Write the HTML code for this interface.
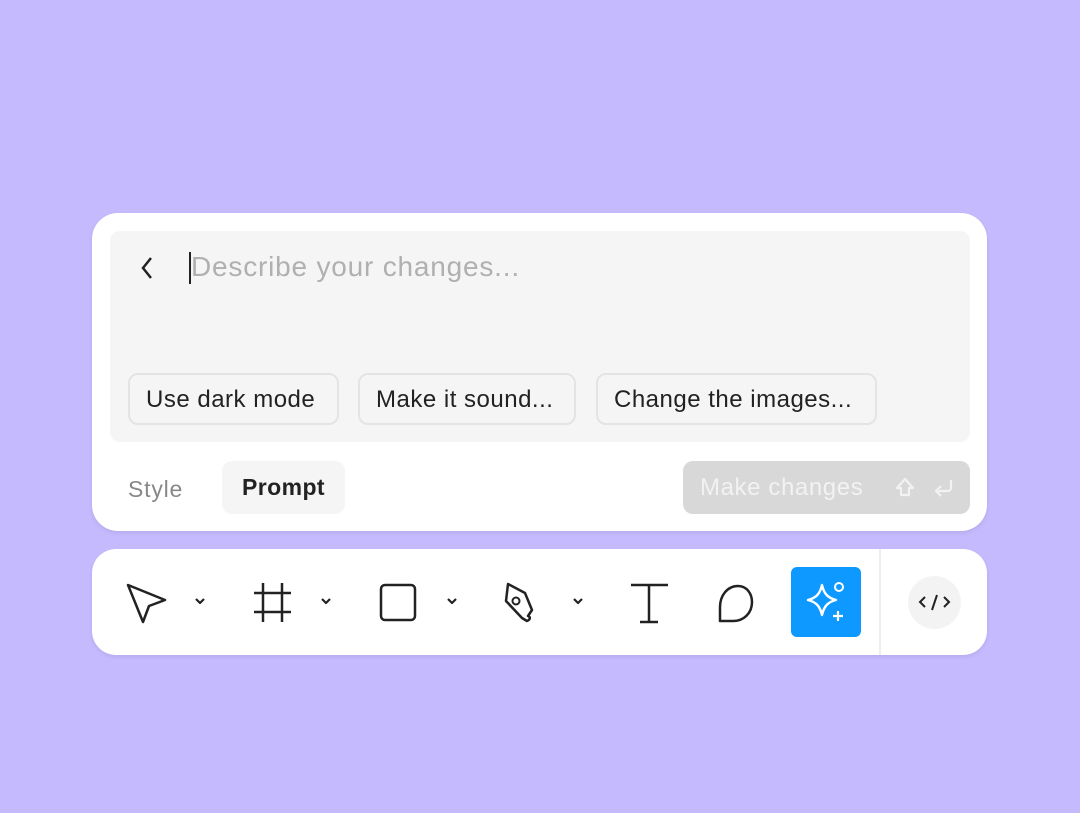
<!DOCTYPE html><html><head><style>
body{margin:0;width:1080px;height:813px;background:#c5bafe;font-family:"Liberation Sans",sans-serif;position:relative;overflow:hidden}
.card{position:absolute;left:92px;top:213px;width:895px;height:318px;background:#fff;border-radius:26px;box-shadow:0 2px 4px rgba(0,0,0,.08)}
.inner{position:absolute;left:18px;top:18px;width:860px;height:211px;background:#f5f5f5;border-radius:10px}
.chip{position:absolute;top:142px;height:52px;border:2px solid #e4e4e4;border-radius:10px;box-sizing:border-box;font-size:24px;letter-spacing:0.5px;color:#222;line-height:50px;padding-left:16px;background:#f5f5f5}
.tool{position:absolute;left:92px;top:549px;width:895px;height:106px;background:#fff;border-radius:24px;box-shadow:0 2px 4px rgba(0,0,0,.08)}
svg{position:absolute}
</style></head><body>
<div class="card">
<div class="inner">
<svg style="left:28px;top:23px" width="20" height="30" viewBox="0 0 20 30"><path d="M13 4L5 14l8 10" stroke="#222" stroke-width="2.5" fill="none"/></svg>
<div style="position:absolute;left:79px;top:21px;width:2px;height:32px;background:#222"></div>
<div style="position:absolute;left:81px;top:20px;font-size:28px;letter-spacing:0.8px;color:#b0b0b0">Describe your changes...</div>
<div class="chip" style="left:18px;width:211px">Use dark mode</div>
<div class="chip" style="left:248px;width:218px">Make it sound...</div>
<div class="chip" style="left:486px;width:281px">Change the images...</div>
</div>
<div style="position:absolute;left:36px;top:263px;font-size:23px;letter-spacing:0.8px;color:#888">Style</div>
<div style="position:absolute;left:130px;top:248px;width:123px;height:53px;background:#f5f5f5;border-radius:10px;font-size:23px;font-weight:bold;letter-spacing:0.4px;color:#222;text-align:center;line-height:53px">Prompt</div>
<div style="position:absolute;left:591px;top:248px;width:287px;height:53px;background:#d8d8d8;border-radius:10px;font-size:24px;letter-spacing:0.6px;color:#f2f2f2;line-height:53px;padding-left:17px;box-sizing:border-box">Make changes
<svg style="left:212px;top:16px" width="20" height="22" viewBox="0 0 20 22"><path d="M10 2L2 11h4v7h8v-7h4z" stroke="#f2f2f2" stroke-width="2.2" fill="none" stroke-linejoin="round"/></svg>
<svg style="left:249px;top:16px" width="22" height="22" viewBox="0 0 22 22"><path d="M19 3v8a3 3 0 0 1-3 3H4M9 9l-5 5 5 5" stroke="#f2f2f2" stroke-width="2.2" fill="none"/></svg>
</div>
</div>
<div class="tool">
<svg style="left:0;top:0" width="700" height="106" viewBox="0 0 700 106">
<g stroke="#222" stroke-width="2.5" fill="none" stroke-linejoin="round">
<path d="M36 36l37 15-16 6-6 16z"/>
<path d="M104 50l4 4 4-4" stroke-width="2.2"/>
<path d="M171 34v39M190 34v39M162 44h37M162 63h37"/>
<path d="M230 50l4 4 4-4" stroke-width="2.2"/>
<rect x="289" y="36" width="34" height="35" rx="4"/>
<path d="M356 50l4 4 4-4" stroke-width="2.2"/>
<path d="M416 35l-2 17 16 17 5 3c3-1 4-4 1-5l4-6-7-17z"/>
<circle cx="424" cy="52" r="3.5" stroke-width="2"/>
<path d="M482 50l4 4 4-4" stroke-width="2.2"/>
<path d="M539 36h37M557 36v37M548 73h18"/>
<path d="M641 72h-13v-14c0-11 7-21 18-21 9 0 14 8 14 16 0 11-8 19-19 19z"/>
</g>
</svg>
<div style="position:absolute;left:699px;top:18px;width:70px;height:70px;background:#0d99ff;border-radius:6px"></div>
<svg style="left:699px;top:18px" width="70" height="70" viewBox="0 0 70 70"><path d="M31 18c2 9 6 13 14 15-8 2-12 6-14 15-2-9-6-13-14-15 8-2 12-6 14-15z" stroke="#fff" stroke-width="2.4" fill="none" stroke-linejoin="round"/><circle cx="48" cy="20" r="4" stroke="#fff" stroke-width="2" fill="none"/><path d="M47 44v10M42 49h10" stroke="#fff" stroke-width="2.2"/></svg>
<div style="position:absolute;left:787px;top:0;width:2px;height:106px;background:#eee"></div>
<div style="position:absolute;left:816px;top:27px;width:53px;height:53px;border-radius:50%;background:#f3f3f3"></div>
<svg style="left:816px;top:27px" width="53" height="53" viewBox="0 0 53 53"><path d="M17 21l-5 5 5 5M36 21l5 5-5 5M29 19l-5 15" stroke="#222" stroke-width="2" fill="none"/></svg>
</div>
</body></html>
